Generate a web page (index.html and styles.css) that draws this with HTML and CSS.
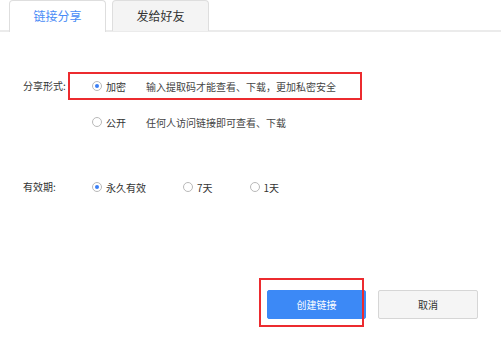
FILE: index.html
```html
<!DOCTYPE html>
<html lang="zh-CN">
<head>
<meta charset="utf-8">
<title>分享</title>
<link rel="stylesheet" href="styles.css">
</head>
<body>
<div class="tabbar">
  <div class="tab tab-active">链接分享</div>
  <div class="tab">发给好友</div>
</div>
<div class="form">
  <div class="field">
    <div class="label">分享形式:</div>
    <div class="options-col">
      <div class="opt-row opt-row-marked">
        <span class="radio radio-on"></span><span class="opt-name">加密</span><span class="opt-desc">输入提取码才能查看、下载，更加私密安全</span>
      </div>
      <div class="opt-row">
        <span class="radio"></span><span class="opt-name">公开</span><span class="opt-desc">任何人访问链接即可查看、下载</span>
      </div>
    </div>
  </div>
  <div class="field field-valid">
    <div class="label">有效期:</div>
    <div class="options-inline">
      <div class="opt"><span class="radio radio-on"></span><span class="opt-text">永久有效</span></div>
      <div class="opt"><span class="radio"></span><span class="opt-text">7天</span></div>
      <div class="opt"><span class="radio"></span><span class="opt-text">1天</span></div>
    </div>
  </div>
  <div class="actions">
    <button class="btn btn-primary marked">创建链接</button>
    <button class="btn btn-default">取消</button>
  </div>
</div>
</body>
</html>
```
FILE: styles.css
```css
* { box-sizing: border-box; }
html, body {
  margin: 0;
  padding: 0;
  background: #ffffff;
  width: 501px;
  height: 337px;
  overflow: hidden;
  font-family: "Noto Sans CJK SC", "Noto Sans", sans-serif;
  color: #333;
}
.tabbar {
  display: flex;
  gap: 6px;
  height: 32px;
  padding-left: 9px;
  border-bottom: 2px solid #ebebeb;
}
.tab {
  width: 97px;
  height: 31px;
  border: 1px solid #dedede;
  border-bottom: none;
  border-radius: 4px 4px 0 0;
  background: #f4f4f4;
  font-size: 12px;
  line-height: 30px;
  text-align: center;
  color: #333;
}
.tab-active {
  background: #fff;
  color: #4a8cf6;
  height: 32px;
  position: relative;
  z-index: 1;
}
.form {
  padding-top: 40px;
  font-size: 10px;
}
.field {
  display: flex;
  align-items: flex-start;
}
.label {
  width: 66px;
  padding-left: 23px;
  text-align: left;
  line-height: 28px;
  height: 28px;
  flex: none;
  color: #333;
}
.options-col {
  display: flex;
  flex-direction: column;
  gap: 8px;
  margin-left: 2px;
}
.opt-row {
  width: 294px;
  height: 28px;
  border: 2px solid transparent;
  padding-left: 22px;
  display: flex;
  align-items: center;
}
.opt-row-marked { border-color: #ec2b2f; }
.radio {
  width: 10px;
  height: 10px;
  border: 1px solid #b9b9b9;
  border-radius: 50%;
  background: #fff;
  flex: none;
  display: inline-flex;
  align-items: center;
  justify-content: center;
}
.radio-on::after {
  content: "";
  width: 4px;
  height: 4px;
  border-radius: 50%;
  background: #3a7ff5;
}
.opt-name {
  margin-left: 4px;
  width: 40px;
  color: #333;
}
.opt-desc { color: #444; }
.field-valid { margin-top: 37px; }
.options-inline {
  display: flex;
  align-items: center;
  gap: 37px;
  height: 28px;
  margin-left: 26px;
}
.opt {
  display: flex;
  align-items: center;
}
.opt-text { margin-left: 4px; }
.actions {
  display: flex;
  justify-content: flex-end;
  gap: 12px;
  margin-top: 89px;
  padding-right: 23px;
}
.btn {
  width: 100px;
  height: 29px;
  font-family: inherit;
  font-size: 10px;
  border-radius: 2px;
  padding: 0;
  cursor: pointer;
}
.btn-primary {
  background: #3c89f6;
  border: 1px solid #3c89f6;
  color: #fff;
  width: 99px;
}
.btn-default {
  background: #f5f5f5;
  border: 1px solid #d6d6d6;
  color: #333;
}
.marked { position: relative; }
.marked::after {
  content: "";
  position: absolute;
  left: -9px;
  top: -13px;
  right: 1px;
  bottom: -9px;
  border: 2px solid #ec2b2f;
  pointer-events: none;
}
```
